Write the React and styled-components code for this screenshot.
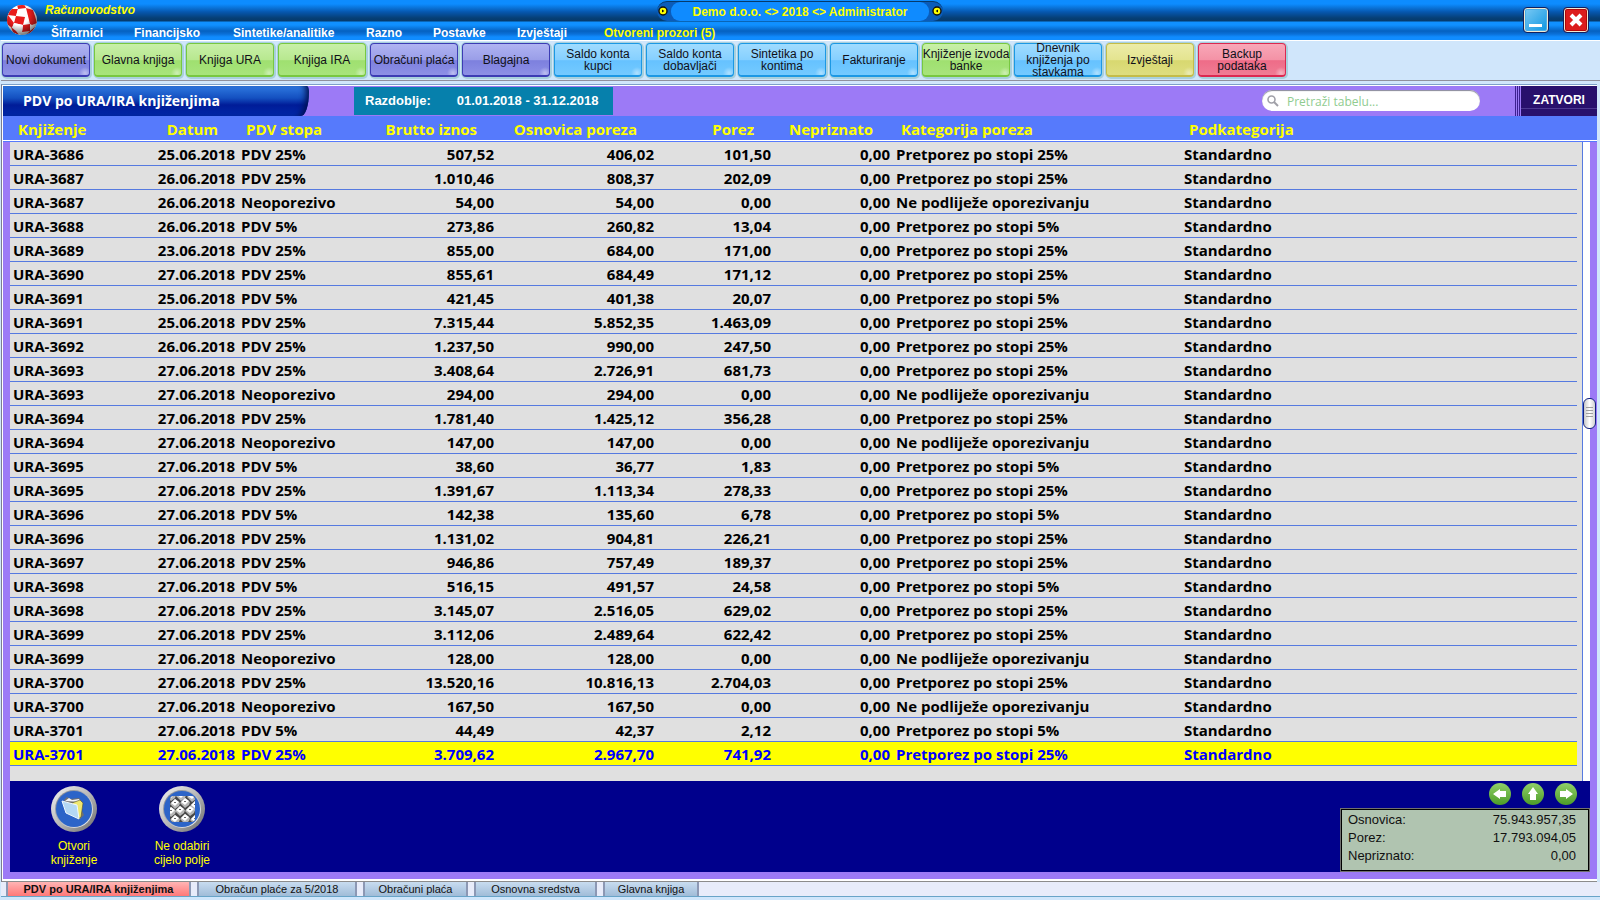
import React from "react";
import styled, { createGlobalStyle, css } from "styled-components";

const sans = '"Liberation Sans", Arial, sans-serif';
const humanist = '"Open Sans", "Noto Sans", sans-serif';

const Global = createGlobalStyle`
  *, *::before, *::after { box-sizing: border-box; }
  html, body, #root { height: 100%; }
  body { margin: 0; background: #d0e6fb; font-family: ${sans}; }
  button, input { font: inherit; margin: 0; padding: 0; border: 0; background: none; color: inherit; }
  button { cursor: pointer; }
`;

const Shell = styled.div`
  min-height: 100%;
  display: flex;
  flex-direction: column;
`;

/* ---- title bar and menu ---- */

const TitleBar = styled.header`
  display: grid;
  grid-template-columns: 44px 1fr auto;
  height: 40px;
  background: linear-gradient(
    #0d8cff 0, #0d8cff 4px, #0657ae 12px, #063f75 18px, #053a6c 21px,
    #1090ff 22px, #1090ff 25px, #0561c0 31px, #0a70d8 34px, #108cff 37px, #108cff 40px
  );
`;

const Logo = styled.div`
  padding: 4px 0 0 6px;
`;

const TitleBody = styled.div`
  display: grid;
  grid-template-rows: 22px 18px;
`;

const TitleRow = styled.div`
  display: grid;
  grid-template-columns: 613px auto 1fr;
`;

const AppName = styled.h1`
  margin: 0;
  padding: 1px 0 0 1px;
  font-size: 12px;
  line-height: 18px;
  font-style: italic;
  color: #ffff00;
`;

const Session = styled.div`
  display: flex;
  align-items: center;
  justify-content: space-between;
  width: 286px;
  height: 20px;
  margin-top: 1px;
  padding: 0 1px;
  border-radius: 10px;
  border-top: 1px solid #053a6c;
  background: #0a5cba;
  svg { margin-bottom: 2px; }
`;

const SessionText = styled.div`
  flex: 1;
  height: 19px;
  margin: 0 3px;
  border-radius: 9px;
  background: #0f8bff;
  color: #ffff00;
  font-size: 12px;
  line-height: 20px;
  font-weight: bold;
  text-align: center;
`;

const MenuBar = styled.nav`
  display: flex;
  gap: 32px;
  padding-left: 7px;
`;

const MenuLink = styled.a`
  width: ${(p) => p.$w}px;
  font-size: 12px;
  line-height: 22px;
  font-weight: bold;
  white-space: nowrap;
  text-decoration: none;
  color: ${(p) => (p.$active ? "#ffff00" : "#ffffff")};
`;

const WindowButtons = styled.div`
  display: flex;
  gap: 14px;
  padding: 7px 11px 0 0;
`;

const WindowButton = styled.button`
  width: 26px;
  height: 26px;
  border: 1px solid #102060;
  border-radius: 4px;
  background: ${(p) => (p.$danger ? "#dc1c1c" : "linear-gradient(135deg, #7ecbf5, #0a94e0)")};
  box-shadow: inset 0 0 0 1px #f0e8d0, inset 0 0 0 2px ${(p) => (p.$danger ? "#b00808" : "#4aaee8")};
  svg { display: block; }
`;

/* ---- toolbar ---- */

const Toolbar = styled.div`
  display: flex;
  gap: 4px;
  height: 41px;
  padding: 2px 0 0 1px;
  margin-left: 1px;
  border-top: 1px solid #ffffff;
  border-bottom: 1px solid #8f8f9c;
`;

const tones = {
  violet: ["#b0b4f2", "#9a9ee8", "#7d80de", "#8d90e6", "#3c3cb4"],
  green: ["#c8f0a8", "#b8e890", "#9fe070", "#a8e47c", "#78c840"],
  blue: ["#a0dcff", "#86d0ff", "#66c2ff", "#74caff", "#1c98e4"],
  yellow: ["#ececa8", "#e4e490", "#d8d870", "#dede80", "#c4bc48"],
  red: ["#f8a8b8", "#f492a6", "#ee6c88", "#f07c94", "#dc2850"],
};

const ToolButton = styled.button`
  width: 88px;
  height: 34px;
  flex: none;
  border: 1px solid ${(p) => tones[p.$tone][4]};
  border-bottom-width: 2px;
  border-radius: 4px;
  background:
    radial-gradient(circle at 82px 29px, #ffffff70 0, #ffffff00 6px),
    linear-gradient(
      ${(p) => tones[p.$tone][0]}, ${(p) => tones[p.$tone][1]} 50%,
      ${(p) => tones[p.$tone][2]} 54%, ${(p) => tones[p.$tone][3]}
    );
  box-shadow: 0 0 0 1px #a8d0dc, 1px 1px 0 1px #a8d0dc;
  color: #101018;
  font-size: 12px;
  line-height: 12px;
  display: flex;
  align-items: center;
  justify-content: center;
  text-align: center;
  white-space: pre;
`;

/* ---- document window ---- */

const Document = styled.main`
  flex: 1;
  display: flex;
  flex-direction: column;
  margin: 3px 3px 0 1px;
  padding: 0 0 2px 1px;
  border-top: 1px solid #7ca0c8;
  border-left: 1px solid #7c7c90;
  border-bottom: 1px solid #8c8c8c;
  background: #ffffff;
`;

const Frame = styled.section`
  flex: 1;
  display: flex;
  flex-direction: column;
  margin-top: 1px;
  background: #9c7af6;
`;

const DocHeader = styled.div`
  display: flex;
  height: 30px;
`;

const DocTitle = styled.h2`
  width: 306px;
  margin: 0;
  padding-left: 20px;
  background: linear-gradient(#2e78e0, #1450c0 12px, #001c98 19px, #0028a8);
  box-shadow: inset -7px 0 6px -4px #001050;
  border-radius: 0 2px 8px 0 / 0 6px 24px 0;
  color: #ffffff;
  font: bold 14px/30px ${humanist};
  white-space: nowrap;
`;

const Period = styled.div`
  display: flex;
  gap: 26px;
  width: 259px;
  margin: 1px 0 1px 45px;
  padding-left: 11px;
  background: #0680ac;
  color: #ffffff;
  font-size: 13px;
  line-height: 27px;
  font-weight: bold;
  white-space: nowrap;
`;

const SearchBox = styled.label`
  display: flex;
  align-items: center;
  gap: 8px;
  width: 218px;
  height: 21px;
  margin: 4px 35px 0 auto;
  padding-left: 5px;
  border-radius: 10px;
  background: #ffffff;
  box-shadow: inset 0 1px 1px #888899;
`;

const SearchInput = styled.input`
  width: 180px;
  padding-top: 3px;
  outline: none;
  font: 12px/20px ${humanist};
  &::placeholder { color: #90cc90; opacity: 1; }
`;

const CloseButton = styled.button`
  width: 82px;
  height: 30px;
  padding: 0 0 2px 6px;
  background:
    linear-gradient(90deg, #3c2090 0 1px, transparent 1px 2px, #3c2090 2px 3px, transparent 3px 4px, #3c2090 4px 5px, transparent 5px) 0 0 / 6px 100% no-repeat,
    linear-gradient(#28106c 22px, #4c3890 22px, #4c3890 23px, #28106c 23px) 6px 0 no-repeat;
  color: #ffffff;
  font-size: 12px;
  font-weight: bold;
`;

/* ---- table ---- */

const TableArea = styled.div`
  flex: 1;
  display: flex;
  padding: 0 7px;
  background: linear-gradient(#567afc 24px, #ffffff 24px, #ffffff 25px, #567afc 25px) 0 0 / 100% 26px no-repeat;
`;

const TableBody = styled.div`
  flex: 1;
  padding-right: 5px;
  background: linear-gradient(transparent 26px, #e0e0e0 26px);
`;

const Table = styled.table`
  width: 100%;
  border-collapse: separate;
  border-spacing: 0;
  table-layout: fixed;
  color: #000000;
  font: bold 15px/21px ${humanist};
`;

const HeadCell = styled.th`
  height: 26px;
  padding: ${(p) => (p.$num ? "0 20px 0 0" : "0 0 0 8px")};
  color: #ffff00;
  line-height: 26px;
  text-align: ${(p) => (p.$num ? "right" : "left")};
  white-space: nowrap;
`;

const Cell = styled.td`
  height: 24px;
  padding: ${(p) => (p.$num ? "2px 3px 0 0" : "2px 0 0 3px")};
  border-bottom: 1px solid #567ae0;
  text-align: ${(p) => (p.$num ? "right" : "left")};
  white-space: nowrap;
`;

const Row = styled.tr`
  ${(p) => p.$selected && css`background: #ffff00; color: #0000ff;`}
`;

const ScrollTrack = styled.div`
  position: relative;
  width: 8px;
  margin-top: 26px;
  border-left: 1px solid #567ae0;
  background: #ffffff;
`;

const ScrollThumb = styled.div`
  position: absolute;
  top: 40%;
  right: -6px;
  width: 13px;
  height: 31px;
  border: 1px solid #102080;
  border-radius: 6px;
  background:
    repeating-linear-gradient(#a0a0a0 0 1px, transparent 1px 3px) 50% 50% / 7px 12px no-repeat,
    linear-gradient(90deg, #c8c8c8, #ffffff, #d0d0d0);
`;

/* ---- footer ---- */

const Footer = styled.footer`
  display: flex;
  justify-content: space-between;
  height: 91px;
  margin: 0 7px 7px;
  background: #00008c;
`;

const Actions = styled.div`
  display: flex;
  padding: 4px 0 0 10px;
`;

const Action = styled.button`
  display: flex;
  flex-direction: column;
  align-items: center;
  gap: 6px;
  width: 108px;
  height: 82px;
  color: #ffff00;
  font-size: 12px;
  line-height: 14px;
  white-space: pre-line;
  svg { flex: none; }
`;

const Summary = styled.div`
  display: flex;
  flex-direction: column;
  width: 250px;
`;

const Arrows = styled.div`
  display: flex;
  justify-content: flex-end;
  gap: 9px;
  height: 27px;
  padding: 1px 12px 0 0;
`;

const ArrowButton = styled.button`
  width: 24px;
  height: 24px;
  svg { display: block; }
`;

const Totals = styled.dl`
  flex: 1;
  display: grid;
  grid-template-columns: 1fr auto;
  align-content: start;
  margin: 0;
  padding: 1px 12px 0 6px;
  border: 2px solid #000000;
  outline: 1px solid #707070;
  outline-offset: -1px;
  background: #b0c4b0;
  color: #101010;
  font-size: 13px;
  line-height: 18px;
  dd { margin: 0; text-align: right; }
`;

/* ---- window tabs ---- */

const Tabs = styled.nav`
  display: flex;
  gap: 6px;
  height: 15px;
  margin-left: 1px;
  padding-left: 5px;
  border-bottom: 1px solid #68a4c8;
  background: #e8ecfa;
`;

const Tab = styled.button`
  width: ${(p) => p.$w}px;
  border: solid #8c98b4;
  border-width: 0 2px;
  background: ${(p) => (p.$active ? "linear-gradient(#ffb4b4, #ff7878)" : "linear-gradient(#c8dcf0, #a0bcd8)")};
  color: #101010;
  font-size: 11px;
  line-height: 14px;
  font-weight: ${(p) => (p.$active ? "bold" : "normal")};
  white-space: nowrap;
`;

const BottomEdge = styled.div`
  height: 3px;
`;

const menus = [
  ["Šifrarnici", 51], ["Financijsko", 67], ["Sintetike/analitike", 101], ["Razno", 35],
  ["Postavke", 52], ["Izvještaji", 55], ["Otvoreni prozori (5)", 120],
];

const tools = [
  ["Novi dokument", "violet"], ["Glavna knjiga", "green"], ["Knjiga URA", "green"],
  ["Knjiga IRA", "green"], ["Obračuni plaća", "violet"], ["Blagajna", "violet"],
  ["Saldo konta\nkupci", "blue"], ["Saldo konta\ndobavljači", "blue"],
  ["Sintetika po\nkontima", "blue"], ["Fakturiranje", "blue"],
  ["Knjiženje izvoda\nbanke", "green"], ["Dnevnik\nknjiženja po\nstavkama", "blue"],
  ["Izvještaji", "yellow"], ["Backup\npodataka", "red"],
];

const columns = [
  ["Knjiženje", 137, false], ["Datum", 91, true], ["PDV stopa", 124, false],
  ["Brutto iznos", 135, true], ["Osnovica poreza", 160, true], ["Porez", 117, true],
  ["Nepriznato", 119, true], ["Kategorija poreza", 288, false], ["Podkategorija", null, false],
];

const entries = [
  ["3686", "25", "25%", "507,52", "406,02", "101,50"],
  ["3687", "26", "25%", "1.010,46", "808,37", "202,09"],
  ["3687", "26", "", "54,00", "54,00", "0,00"],
  ["3688", "26", "5%", "273,86", "260,82", "13,04"],
  ["3689", "23", "25%", "855,00", "684,00", "171,00"],
  ["3690", "27", "25%", "855,61", "684,49", "171,12"],
  ["3691", "25", "5%", "421,45", "401,38", "20,07"],
  ["3691", "25", "25%", "7.315,44", "5.852,35", "1.463,09"],
  ["3692", "26", "25%", "1.237,50", "990,00", "247,50"],
  ["3693", "27", "25%", "3.408,64", "2.726,91", "681,73"],
  ["3693", "27", "", "294,00", "294,00", "0,00"],
  ["3694", "27", "25%", "1.781,40", "1.425,12", "356,28"],
  ["3694", "27", "", "147,00", "147,00", "0,00"],
  ["3695", "27", "5%", "38,60", "36,77", "1,83"],
  ["3695", "27", "25%", "1.391,67", "1.113,34", "278,33"],
  ["3696", "27", "5%", "142,38", "135,60", "6,78"],
  ["3696", "27", "25%", "1.131,02", "904,81", "226,21"],
  ["3697", "27", "25%", "946,86", "757,49", "189,37"],
  ["3698", "27", "5%", "516,15", "491,57", "24,58"],
  ["3698", "27", "25%", "3.145,07", "2.516,05", "629,02"],
  ["3699", "27", "25%", "3.112,06", "2.489,64", "622,42"],
  ["3699", "27", "", "128,00", "128,00", "0,00"],
  ["3700", "27", "25%", "13.520,16", "10.816,13", "2.704,03"],
  ["3700", "27", "", "167,50", "167,50", "0,00"],
  ["3701", "27", "5%", "44,49", "42,37", "2,12"],
  ["3701", "27", "25%", "3.709,62", "2.967,70", "741,92"],
];

const toCells = ([no, day, rate, gross, base, tax]) => [
  `URA-${no}`, `${day}.06.2018`, rate ? `PDV ${rate}` : "Neoporezivo", gross, base, tax, "0,00",
  rate ? `Pretporez po stopi ${rate}` : "Ne podliježe oporezivanju", "Standardno",
];

const tabs = [
  ["PDV po URA/IRA knjiženjima", 185], ["Obračun plaće za 5/2018", 160], ["Obračuni plaća", 105],
  ["Osnovna sredstva", 123], ["Glavna knjiga", 96],
];

const BallLogo = () => (
  <svg width="32" height="32" viewBox="0 0 32 32" aria-hidden="true">
    <defs>
      <radialGradient id="ball" cx="40%" cy="32%" r="70%">
        <stop offset="0.5" stopColor="#000" stopOpacity="0" />
        <stop offset="1" stopColor="#000" stopOpacity="0.55" />
      </radialGradient>
      <clipPath id="disc"><circle cx="16" cy="16" r="15" /></clipPath>
    </defs>
    <circle cx="16" cy="16" r="15" fill="#fff" />
    <g clipPath="url(#disc)" fill="#e81c1c">
      <path d="M11 0L18 0L20 4L12 5Z" />
      <path d="M4 5L12 5L10 12L2 11Z" />
      <path d="M20 4L27 6L29 12L22 12Z" />
      <path d="M10 12L12 5L22 12L18 13Z" fill="#fff" />
      <path d="M10 12L19 13L17 21L8 19Z" />
      <path d="M22 12L29 12L31 19L26 21L24 20Z" />
      <path d="M17 21L24 20L24 27L16 28Z" />
      <path d="M0 12L2 11L8 19L6 24L1 20Z" />
      <path d="M6 24L8 19L17 21L16 28L14 31L9 30Z" fill="#fff" />
      <path d="M5 23L10 27L13 31L8 31Z" />
      <path d="M24 27L29 23L26 29L20 31Z" />
    </g>
    <circle cx="16" cy="16" r="15" fill="url(#ball)" />
  </svg>
);

const Knob = ({ flip }) => (
  <svg width="10" height="10" viewBox="0 0 10 10" aria-hidden="true">
    <circle cx="5" cy="5" r="4" fill="#ffff00" stroke="#101010" strokeWidth="1.4" />
    <path d={flip ? "M6 3.4L3.6 5L6 6.6Z" : "M4 3.4L6.4 5L4 6.6Z"} fill="#101010" />
  </svg>
);

const keyCaps = [
  [13, 10], [23, 10], [34, 11], [17, 18], [27, 17], [37, 20],
  [13, 26], [22, 25], [32, 25], [17, 34], [27, 33], [37, 34],
];

const ActionIcon = ({ kind }) => (
  <svg width="48" height="48" viewBox="0 0 48 48" aria-hidden="true">
    <defs>
      <linearGradient id={`rim-${kind}`} x1="0" y1="0" x2="1" y2="1">
        <stop offset="0" stopColor="#f4f4f4" />
        <stop offset="0.5" stopColor="#b8b8b8" />
        <stop offset="1" stopColor="#686868" />
      </linearGradient>
      <linearGradient id={`bevel-${kind}`} x1="0" y1="0" x2="1" y2="1">
        <stop offset="0" stopColor="#707888" />
        <stop offset="1" stopColor="#f8f8f8" />
      </linearGradient>
      <clipPath id="keys"><rect x="12" y="11" width="25" height="26" rx="4" /></clipPath>
    </defs>
    <circle cx="24" cy="24" r="23" fill={`url(#rim-${kind})`} />
    <circle cx="24" cy="24" r="19" fill={`url(#bevel-${kind})`} />
    <circle cx="24" cy="24" r="18" fill="#2c64c8" />
    {kind === "folder" ? (
      <g>
        <path d="M14 15L17 12L20 14L29 13L32 17L31 24L34 30L30 34L18 29Z" fill="#707070" />
        <path d="M15 16L19 13L22 15L29 14L31 17Z" fill="#f4f4f4" />
        <path d="M22 18L30 15L33 18L31 32L28 34Z" fill="#f0e870" stroke="#505030" strokeWidth="0.6" />
        <path d="M12 16L27 20L29 34L16 28Z" fill="#b4d8f4" stroke="#eef8ff" strokeWidth="1" />
      </g>
    ) : (
      <g clipPath="url(#keys)">
        <rect x="11" y="10" width="27" height="28" fill="#484848" />
        {keyCaps.map(([x, y]) => (
          <g key={`${x}-${y}`}>
            <path d={`M${x - 5} ${y + 1}l5 -5l5 4l-1 3l-4 3z`} fill="#b8b8b8" />
            <path d={`M${x - 4} ${y}l4 -4l4 3l-4 4z`} fill="#ffffff" />
            <path d={`M${x - 1} ${y}l1 -1l1 1`} fill="none" stroke="#404040" strokeWidth="0.8" />
          </g>
        ))}
      </g>
    )}
  </svg>
);

const ArrowIcon = ({ turn }) => (
  <svg width="24" height="24" viewBox="0 0 24 24" aria-hidden="true">
    <defs>
      <linearGradient id="leaf" x1="0" y1="0" x2="0" y2="1">
        <stop offset="0" stopColor="#90d068" />
        <stop offset="1" stopColor="#4c9c28" />
      </linearGradient>
    </defs>
    <circle cx="12" cy="12" r="11" fill="url(#leaf)" />
    <path d="M12 5L17 12L15 12L15 18L9 18L9 12L7 12Z" fill="#fff" transform={`rotate(${turn} 12 12)`} />
  </svg>
);

export default function App() {
  return (
    <Shell>
      <Global />
      <TitleBar>
        <Logo><BallLogo /></Logo>
        <TitleBody>
          <TitleRow>
            <AppName>Računovodstvo</AppName>
            <Session>
              <Knob />
              <SessionText>Demo d.o.o. &lt;&gt; 2018 &lt;&gt; Administrator</SessionText>
              <Knob flip />
            </Session>
          </TitleRow>
          <MenuBar>
            {menus.map(([label, w], i) => (
              <MenuLink key={label} href="#" $w={w} $active={i === 6}>{label}</MenuLink>
            ))}
          </MenuBar>
        </TitleBody>
        <WindowButtons>
          <WindowButton aria-label="Minimize">
            <svg width="24" height="24" viewBox="0 0 24 24"><path d="M5 17.5H18" stroke="#fff" strokeWidth="3" /></svg>
          </WindowButton>
          <WindowButton aria-label="Close" $danger>
            <svg width="24" height="24" viewBox="0 0 24 24"><path d="M7 7L17 17M17 7L7 17" stroke="#fff" strokeWidth="4" /></svg>
          </WindowButton>
        </WindowButtons>
      </TitleBar>

      <Toolbar>
        {tools.map(([label, tone]) => (
          <ToolButton key={label} $tone={tone}>{label}</ToolButton>
        ))}
      </Toolbar>

      <Document>
        <Frame>
          <DocHeader>
            <DocTitle>PDV po URA/IRA knjiženjima</DocTitle>
            <Period><span>Razdoblje:</span><span>01.01.2018 - 31.12.2018</span></Period>
            <SearchBox>
              <svg width="12" height="12" viewBox="0 0 12 12" aria-hidden="true">
                <circle cx="4.5" cy="4.5" r="3.5" fill="none" stroke="#a0a0a8" strokeWidth="1.6" />
                <path d="M7 7L11 11" stroke="#a0a0a8" strokeWidth="2" />
              </svg>
              <SearchInput type="text" aria-label="Pretraži tabelu" placeholder="Pretraži tabelu..." />
            </SearchBox>
            <CloseButton>ZATVORI</CloseButton>
          </DocHeader>

          <TableArea>
            <TableBody>
              <Table>
                <colgroup>
                  {columns.map(([label, w]) => <col key={label} width={w ?? undefined} />)}
                </colgroup>
                <thead>
                  <tr>
                    {columns.map(([label, , num]) => <HeadCell key={label} scope="col" $num={num}>{label}</HeadCell>)}
                  </tr>
                </thead>
                <tbody>
                  {entries.map((entry, r) => (
                    <Row key={r} $selected={r === entries.length - 1}>
                      {toCells(entry).map((text, c) => <Cell key={c} $num={columns[c][2]}>{text}</Cell>)}
                    </Row>
                  ))}
                </tbody>
              </Table>
            </TableBody>
            <ScrollTrack><ScrollThumb /></ScrollTrack>
          </TableArea>

          <Footer>
            <Actions>
              <Action><ActionIcon kind="folder" />{"Otvori\nknjiženje"}</Action>
              <Action><ActionIcon kind="keys" />{"Ne odabiri\ncijelo polje"}</Action>
            </Actions>
            <Summary>
              <Arrows>
                <ArrowButton aria-label="Previous"><ArrowIcon turn={-90} /></ArrowButton>
                <ArrowButton aria-label="Up"><ArrowIcon turn={0} /></ArrowButton>
                <ArrowButton aria-label="Next"><ArrowIcon turn={90} /></ArrowButton>
              </Arrows>
              <Totals>
                <dt>Osnovica:</dt><dd>75.943.957,35</dd>
                <dt>Porez:</dt><dd>17.793.094,05</dd>
                <dt>Nepriznato:</dt><dd>0,00</dd>
              </Totals>
            </Summary>
          </Footer>
        </Frame>
      </Document>

      <Tabs>
        {tabs.map(([label, w], i) => <Tab key={label} $w={w} $active={i === 0}>{label}</Tab>)}
      </Tabs>
      <BottomEdge />
    </Shell>
  );
}
